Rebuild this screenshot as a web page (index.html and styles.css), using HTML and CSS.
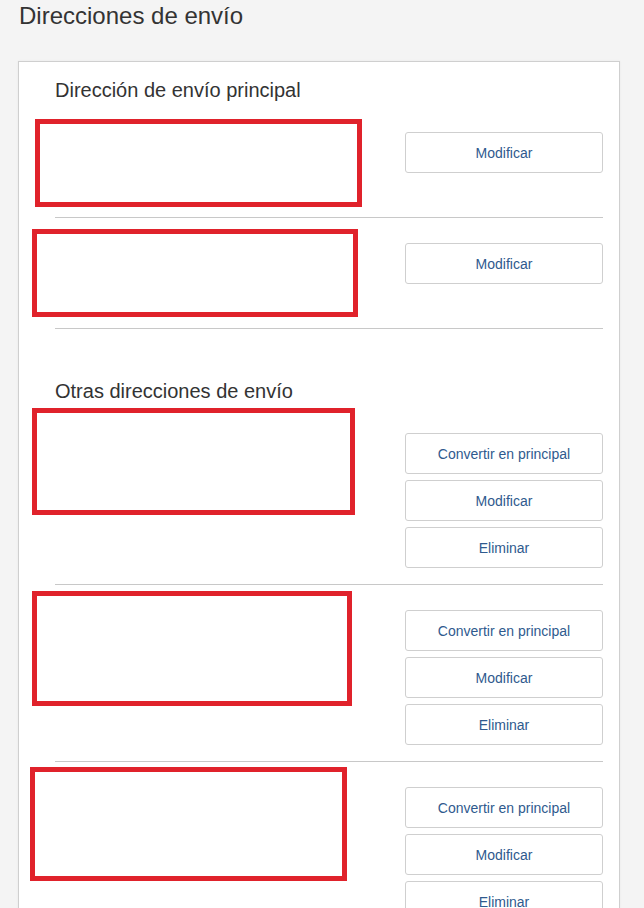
FILE: index.html
```html
<!DOCTYPE html>
<html lang="es">
<head>
    <meta charset="UTF-8">
    <meta name="viewport" content="width=device-width, initial-scale=1.0">
    <title>Direcciones de envío</title>
    <link rel="stylesheet" href="styles.css">
</head>
<body>
    <h1 class="page-title">Direcciones de envío</h1>

    <div class="card">
        <h2 class="section-title">Dirección de envío principal</h2>

        <div class="address-row">
            <div class="address"><span class="redact r1"></span></div>
            <div class="actions">
                <button>Modificar</button>
            </div>
        </div>
        <div class="address-row">
            <div class="address"><span class="redact r2"></span></div>
            <div class="actions">
                <button>Modificar</button>
            </div>
        </div>

        <h2 class="section-title other">Otras direcciones de envío</h2>

        <div class="address-row">
            <div class="address"><span class="redact r3"></span></div>
            <div class="actions">
                <button>Convertir en principal</button>
                <button>Modificar</button>
                <button>Eliminar</button>
            </div>
        </div>
        <div class="address-row">
            <div class="address"><span class="redact r4"></span></div>
            <div class="actions">
                <button>Convertir en principal</button>
                <button>Modificar</button>
                <button>Eliminar</button>
            </div>
        </div>
        <div class="address-row">
            <div class="address"><span class="redact r5"></span></div>
            <div class="actions">
                <button>Convertir en principal</button>
                <button>Modificar</button>
                <button>Eliminar</button>
            </div>
        </div>
    </div>
</body>
</html>
```

FILE: styles.css
```css
body {
    font-family: Arial, "Liberation Sans", sans-serif;
    margin: 0;
    padding: 0 24px 0 18px;
    background-color: #f4f4f4;
    color: #333;
}
.page-title {
    font-size: 24px;
    font-weight: normal;
    line-height: 29px;
    margin: 1px 0 0 1px;
}
.card {
    margin-top: 31px;
    background-color: #fff;
    border: 1px solid #cfcfcf;
    box-shadow: 0 0 2px rgba(0,0,0,0.06);
    padding: 16px 16px 40px 36px;
}
.section-title {
    font-size: 20px;
    font-weight: normal;
    line-height: 24px;
    margin: 0 0 5px;
    color: #333;
}
.section-title.other {
    margin-top: 50px;
}
.address-row {
    display: flex;
    justify-content: space-between;
    align-items: flex-start;
    padding: 25px 0 16px;
    border-bottom: 1px solid #c8c8c8;
}
.address {
    position: relative;
    flex: 1;
    min-height: 69px;
}
.actions {
    display: flex;
    flex-direction: column;
    gap: 6px;
    width: 198px;
}
.actions button {
    height: 41px;
    background-color: #fff;
    border: 1px solid #cfcfcf;
    border-radius: 3px;
    font-family: Arial, "Liberation Sans", sans-serif;
    font-size: 14px;
    color: #2f5a8e;
    cursor: pointer;
}
.actions button:hover {
    background-color: #f7f7f7;
}

/* red redaction marks laid over the address text */
.redact {
    position: absolute;
    border: 5px solid #e0222b;
    box-sizing: border-box;
}
.r1 { left: -20px; top: -13px; width: 327px; height: 88px; }
.r2 { left: -23px; top: -14px; width: 326px; height: 88px; }
.r3 { left: -23px; top: -25px; width: 323px; height: 107px; }
.r4 { left: -23px; top: -19px; width: 320px; height: 115px; }
.r5 { left: -25px; top: -20px; width: 317px; height: 114px; }
```
